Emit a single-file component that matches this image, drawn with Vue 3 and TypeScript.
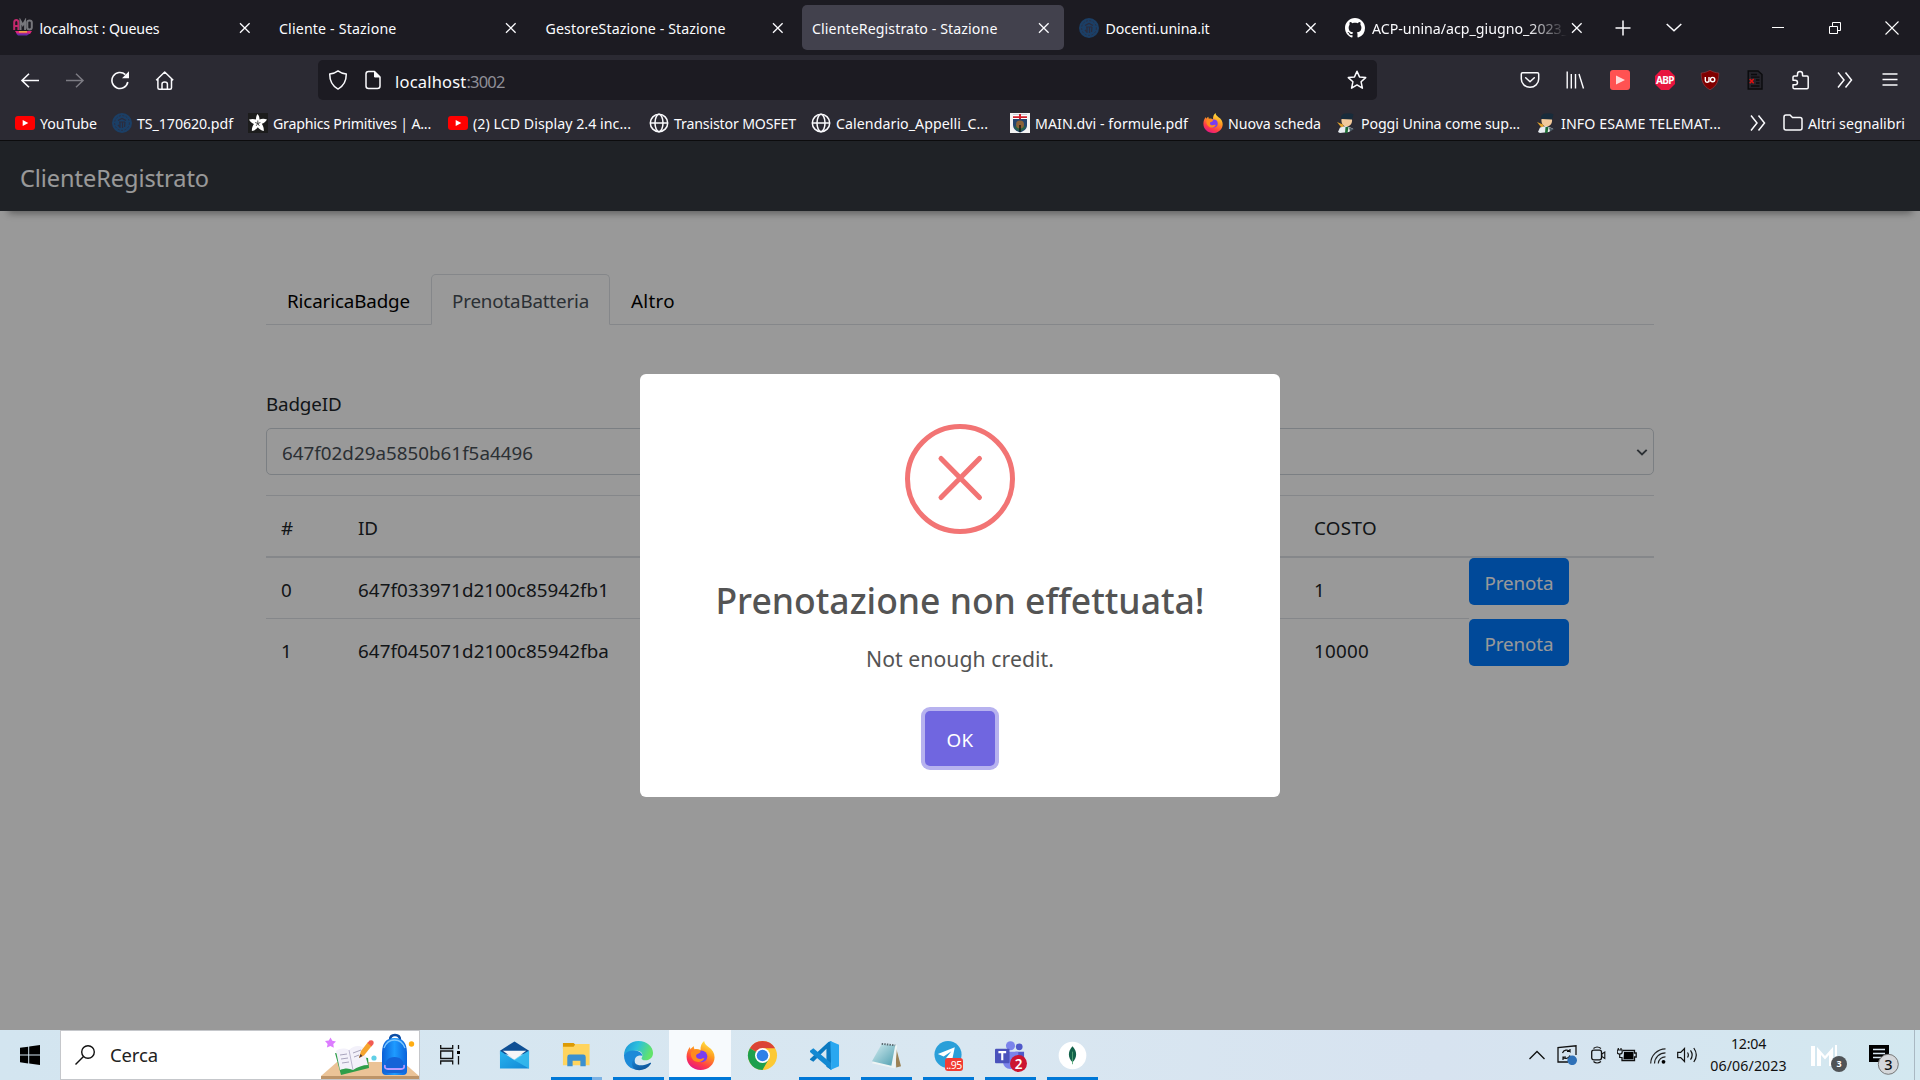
<script setup lang="ts">
interface Tab { title: string; width: number; icon?: string; active?: boolean; fade?: boolean }
interface Bookmark { label: string; icon: string; box: number; width: number }
interface Battery { n: number; id: string; cost: number; costWidth: number }
interface App { icon: string; line: 'none' | 'short' | 'full' | 'split'; badge?: string }

const tabs: Tab[] = [
  { title: 'localhost : Queues', width: 120, icon: 'amq' },
  { title: 'Cliente - Stazione', width: 117.5 },
  { title: 'GestoreStazione - Stazione', width: 180 },
  { title: 'ClienteRegistrato - Stazione', width: 185.5, active: true },
  { title: 'Docenti.unina.it', width: 104, icon: 'unina' },
  { title: 'ACP-unina/acp_giugno_2023_', width: 196, icon: 'github', fade: true },
]

const bookmarks: Bookmark[] = [
  { label: 'YouTube', icon: 'youtube', box: 57, width: 57 },
  { label: 'TS_170620.pdf', icon: 'unina', box: 96, width: 96 },
  { label: 'Graphics Primitives | A...', icon: 'adafruit', box: 160, width: 158 },
  { label: '(2) LCD Display 2.4 inc...', icon: 'youtube', box: 161, width: 158 },
  { label: 'Transistor MOSFET', icon: 'globe', box: 122, width: 122 },
  { label: 'Calendario_Appelli_C...', icon: 'globe', box: 159, width: 152 },
  { label: 'MAIN.dvi - formule.pdf', icon: 'crest', box: 153, width: 153 },
  { label: 'Nuova scheda', icon: 'firefox', box: 93, width: 93 },
  { label: 'Poggi Unina come sup...', icon: 'student', box: 160, width: 159 },
  { label: 'INFO ESAME TELEMAT...', icon: 'student', box: 160, width: 160 },
]

const batteries: Battery[] = [
  { n: 0, id: '647f033971d2100c85942fb1', cost: 1, costWidth: 11 },
  { n: 1, id: '647f045071d2100c85942fba', cost: 10000, costWidth: 55 },
]

const apps: App[] = [
  { icon: 'mail', line: 'none' },
  { icon: 'explorer', line: 'split' },
  { icon: 'edge', line: 'short' },
  { icon: 'firefox', line: 'full' },
  { icon: 'chrome', line: 'none' },
  { icon: 'vscode', line: 'short' },
  { icon: 'notepad', line: 'short' },
  { icon: 'telegram', line: 'short', badge: '..95' },
  { icon: 'teams', line: 'short', badge: '2' },
  { icon: 'mongo', line: 'short' },
]

/* Spreads a label's letters so that it takes the given advance width. */
const vFit = {
  mounted(el: HTMLElement, binding: { value: number }) {
    const range = document.createRange()
    range.selectNodeContents(el)
    const natural = range.getBoundingClientRect().width
    const count = (el.textContent ?? '').trim().length
    if (count > 0) el.style.letterSpacing = `${((binding.value - natural) / count).toFixed(3)}px`
  },
}
</script>

<template>
  <div class="screen">
    <svg class="defs" width="0" height="0" aria-hidden="true">
      <defs>
        <linearGradient id="gFox" x1="0.8" y1="0" x2="0.3" y2="1">
          <stop offset="0" stop-color="#fff04a" /><stop offset=".4" stop-color="#ff9a1f" />
          <stop offset=".75" stop-color="#ff3c47" /><stop offset="1" stop-color="#e31587" />
        </linearGradient>
        <linearGradient id="gEdgeTop" x1="0" y1="0" x2="1" y2="0.3">
          <stop offset="0" stop-color="#1b8fd8" /><stop offset=".5" stop-color="#2cc0dc" /><stop offset="1" stop-color="#62e36b" />
        </linearGradient>
        <linearGradient id="gEdgeBot" x1="0" y1="0" x2="1" y2="1">
          <stop offset="0" stop-color="#1a86d6" /><stop offset="1" stop-color="#0c4a8c" />
        </linearGradient>
        <linearGradient id="gMail" x1="0" y1="0" x2="1" y2="1">
          <stop offset="0" stop-color="#28b5f0" /><stop offset="1" stop-color="#1387d4" />
        </linearGradient>
        <linearGradient id="gBag" x1="0" y1="0" x2="1" y2="0">
          <stop offset="0" stop-color="#0b5fd6" /><stop offset=".5" stop-color="#1e9bff" /><stop offset="1" stop-color="#0a63dc" />
        </linearGradient>
        <linearGradient id="gNote" x1="0" y1="0" x2="1" y2="1">
          <stop offset="0" stop-color="#d6eef2" /><stop offset="1" stop-color="#4f9fb0" />
        </linearGradient>
      </defs>
      <symbol id="youtube" viewBox="0 0 20 20">
        <rect x="0" y="3" width="20" height="14" rx="3" fill="#f00" /><path d="M7.7 7v6l5.6-3z" fill="#fff" />
      </symbol>
      <symbol id="unina" viewBox="0 0 20 20">
        <circle cx="10" cy="10" r="10" fill="#1b3f66" />
        <circle cx="10" cy="10" r="7.4" fill="none" stroke="#2a3044" stroke-width="1" stroke-dasharray="2 1.5" />
        <path d="M6 7.5l4-2 4 2M7 9h6M8 9v6M10.5 9v6M13 9l-.5 5M6 12l2 2" stroke="#2b2c3d" stroke-width="1.2" fill="none" />
      </symbol>
      <symbol id="adafruit" viewBox="0 0 20 20">
        <rect width="20" height="20" fill="#1c1c1c" />
        <path d="M9.5 1c1.5 1.5 2 3.500 2 5.500 2.200-1 5-1 7.500 0-1.200 2.300-3.200 3.700-5.200 4.300 1.400 1.900 2.200 4.500 2 7.200-2.600-.5-4.800-1.900-6-3.700-1.300 1.800-3.400 3.200-5.900 3.700-.2-2.600.5-5 2-7C4 10.300 2 8.900 1 6.600c2.500-.9 5-.9 7 0 0-2 .3-4 1.500-5.600z" fill="#fff" />
        <path d="M9.800 7.500v3M9.800 10.500l2.600-1M9.800 10.500l1.600 2.300M9.800 10.500l-1.600 2.300M9.800 10.500l-2.600-1" stroke="#222" stroke-width=".8" />
      </symbol>
      <symbol id="globe" viewBox="0 0 20 20">
        <g fill="none" stroke="#fbfbfe" stroke-width="1.500"><circle cx="10" cy="10" r="8.700" /><ellipse cx="10" cy="10" rx="4" ry="8.700" /><path d="M1.300 10h17.400" /></g>
      </symbol>
      <symbol id="crest" viewBox="0 0 20 20">
        <rect width="20" height="20" fill="#f4f4f4" /><path d="M3 1.500h14V12c0 4-3 6.200-7 7.500C6 18.200 3 16 3 12z" fill="#24466e" />
        <path d="M3 1.500h14V6H3z" fill="#fff" /><path d="M3 3.300h14v1.700H3zM9 1h2v5H9z" fill="#d0202c" />
        <path d="M4 14l3 3 3 1.500 3-1.500 3-3-2-1H6z" fill="#276246" /><circle cx="10" cy="11.500" r="4" fill="#8a6238" /><path d="M9.300 12h1.400v7H9.300z" fill="#111" />
      </symbol>
      <symbol id="firefox" viewBox="0 0 20 20">
        <path d="M12.500 0c.3 2.200 1.600 3 3 4.200 2.700 1.600 4.200 4.200 4.200 7 0 5-4.300 8.800-9.600 8.800C4.600 20 .4 16 .4 10.800c0-2.600.9-4.900 2.300-6.700l.4 1.700c.8-1.100 1.500-1.700 2.400-2.100-.1.900 0 1.500.4 2 1.500-.3 3-.1 4.100.5C9.900 3.600 10.800 1.300 12.500 0z" fill="url(#gFox)" />
        <circle cx="10.600" cy="10.600" r="4.100" fill="#7a3df0" /><path d="M3.400 7.500c2.200-1.500 5-1.500 6.800-.1-.7 1.300-2.200 1.200-3 2.100-.7 1 .2 2.600 1.600 2.800 1.600.3 2.600-.8 4-.4-1 2.200-3.700 3.200-6 2.300C4.200 13.200 3 10.300 3.400 7.500z" fill="#ff8a1e" />
      </symbol>
      <symbol id="student" viewBox="0 0 20 20">
        <path d="M5 5.500q-.5-4 4-5 6-.8 8.500 1l-1.500 5.500H5z" fill="#182b3a" /><path d="M5.500 6l10.500.5c.5 4-2 7-5.500 7S5 10.500 5.500 6z" fill="#f3c99a" />
        <path d="M1 9l6 2.500 1 3-3-.5z" fill="#e2a32c" /><path d="M4 14.500l6-1.500 7 2.500-4 3.500-9 1-2-1z" fill="#e8ecf0" /><path d="M9.500 14h3l-1 6H9z" fill="#1e6b35" /><path d="M13 14.500l5 1.500-4 2.500z" fill="#4d5b66" />
      </symbol>
      <symbol id="github" viewBox="0 0 16 16">
        <path fill="#fff" d="M8 0C3.580 0 0 3.580 0 8c0 3.540 2.290 6.530 5.470 7.590.4.070.55-.17.55-.38 0-.19-.01-.82-.01-1.490-2.010.37-2.530-.49-2.690-.94-.09-.23-.48-.94-.82-1.130-.28-.15-.68-.52-.01-.53.63-.01 1.080.58 1.230.82.72 1.210 1.870.87 2.330.66.07-.52.28-.87.51-1.070-1.780-.2-3.640-.89-3.640-3.950 0-.87.31-1.590.82-2.150-.08-.2-.36-1.020.08-2.120 0 0 .67-.21 2.200.82.64-.18 1.320-.27 2-.27s1.360.09 2 .27c1.530-1.040 2.200-.82 2.200-.82.44 1.100.16 1.920.08 2.120.51.56.82 1.270.82 2.150 0 3.070-1.870 3.750-3.650 3.950.29.25.54.73.54 1.480 0 1.070-.01 1.930-.01 2.200 0 .21.15.46.55.38A8.010 8.010 0 0 0 16 8c0-4.420-3.580-8-8-8z" />
      </symbol>
      <symbol id="amq" viewBox="0 0 20 20">
        <g fill="none" stroke-width="2"><path d="M1.200 12V4.500Q1.200 2 3.300 2T5.400 4.500V12M1.200 8h4.200" stroke="#c2286c" /><path d="M7.500 12V3l2.300 4 2.300-4v9M14.300 4.500v5Q14.300 11.500 16.500 11.500T18.800 9.500v-5Q18.800 2.500 16.500 2.500T14.300 4.500" stroke="#77777c" /></g>
        <path d="M2 13h17l-2 3H4z" fill="#e0247a" /><path d="M3 15.500h14l-3 2H5z" fill="#6a2ca8" /><path d="M6 13.200h8v1.300H6z" fill="#f0c43a" />
      </symbol>
      <symbol id="chevrons" viewBox="0 0 20 20"><path d="M3 2.500l6 7.500-6 7.500M10.500 2.500l6 7.500-6 7.500" fill="none" stroke="#fbfbfe" stroke-width="1.500" /></symbol>
      <symbol id="cross" viewBox="0 0 20 20"><path d="M5 5.200l9.600 9.600M14.600 5.200l-9.600 9.600" fill="none" stroke="#fbfbfe" stroke-width="1.300" /></symbol>

      <symbol id="mail" viewBox="0 0 32 32">
        <path d="M1 11L16 1.500 31 11v4H1z" fill="#0e4f94" /><path d="M1 11l15 10 15-10v18.500H1z" fill="url(#gMail)" /><path d="M31 11v18.500L14.500 20z" fill="#41c8f5" opacity=".65" /><path d="M4 11h24l-12 9z" fill="#f6f6f8" />
      </symbol>
      <symbol id="explorer" viewBox="0 0 32 32">
        <path d="M2 3h11l2 2v4H2z" fill="#dc9a04" /><path d="M2 7h11l2-3h14.500v22H2z" fill="#ffd45e" /><path d="M6.500 27V17.500q0-2.500 2.500-2.500h14q2.500 0 2.500 2.500V27h-5.500v-5.500h-8V27z" fill="#3b90d0" />
      </symbol>
      <symbol id="edge" viewBox="0 0 32 32">
        <path d="M1 16C1 7 8 1 16 1c9 0 15 6 15 12.500 0 4.500-3.500 7.500-7.500 7.500-3.500 0-5-1.500-4-3 2-3.500-1-7-5-7C8 11 3 13 1 16z" fill="url(#gEdgeTop)" />
        <path d="M1 15.500C3 12 8 10 13.500 11c4 .6 6.500 3 6.500 5.500-4-1.500-8 1-8 5 0 5 5 8.500 10 7.500C14 33.500 1 29 1 15.500z" fill="#1c8ad8" />
        <path d="M12 19c-2 6 5 10 16 4.500.8-.3 1.200.3.800 1-3.800 6-10.800 7.500-15.300 6.200C8.500 29 8 21.500 12 19z" fill="url(#gEdgeBot)" />
      </symbol>
      <symbol id="chrome" viewBox="0 0 32 32">
        <circle cx="16" cy="16" r="15" fill="#fcc934" /><path d="M16 16L3 8.500A15 15 0 0 1 29 8.500H16z" fill="#db4437" /><path d="M3 8.500A15 15 0 0 0 16 31l6.500-11.300L16 16z" fill="#1ea04c" /><circle cx="16" cy="16" r="7.700" fill="#fff" /><circle cx="16" cy="16" r="6" fill="#2f80e8" />
      </symbol>
      <symbol id="vscode" viewBox="0 0 32 32">
        <path d="M23 1v30l-5-3.500V9L4.500 22.500 1 20.500v-1L20 2z" fill="#0b79c0" /><path d="M4.500 8.500L23 24v7L1 12.500v-1.500z" fill="#1389d2" /><path d="M22 1l9 4v22l-9 4 1-3z" fill="#2aa7f0" />
      </symbol>
      <symbol id="notepad" viewBox="0 0 32 32">
        <path d="M25 5l6 22-5 1.500z" fill="#9b8256" /><path d="M11 4l16 1.500-2 24L1 24z" fill="#eef4f4" /><path d="M11 4l14 1.500L21 26.500 1 22z" fill="url(#gNote)" /><path d="M11 4l14 1.500" stroke="#5b6970" stroke-width="2" stroke-dasharray="1.500 1.200" />
      </symbol>
      <symbol id="telegram" viewBox="0 0 32 32">
        <ellipse cx="15.500" cy="15" rx="14" ry="14" fill="#2a9fd9" /><path d="M5 14.500L22.500 7.500 19.500 22l-6-3.500L19 11.500 11 17z" fill="#fff" />
      </symbol>
      <symbol id="teams" viewBox="0 0 32 32">
        <circle cx="16" cy="6" r="4.700" fill="#7b83eb" /><circle cx="25" cy="7" r="3.500" fill="#5059c9" /><path d="M21 12h9v9q-2 6-9 5z" fill="#5059c9" /><path d="M8 12h16v10q-1 8-8 8t-8-8z" fill="#7b83eb" /><rect x="0" y="9" width="15" height="15" rx="1" fill="#4b53bc" /><path d="M3.500 12.500h8M7.500 12.500v8.500" stroke="#fff" stroke-width="2.200" />
      </symbol>
      <symbol id="mongo" viewBox="0 0 32 32">
        <circle cx="16" cy="16" r="14.300" fill="#fff" /><path d="M16 6.500c5 5 5 12 0 16.500-5-4.500-5-11.500 0-16.500z" fill="#116149" /><path d="M16 12v13" stroke="#55a878" stroke-width=".9" />
      </symbol>
    </svg>

    <div class="tabstrip">
      <div v-for="t in tabs" :key="t.title" class="tab" :class="{ active: t.active }">
        <svg v-if="t.icon" class="favicon"><use :href="'#' + t.icon" /></svg>
        <span class="tab-title" :class="{ fade: t.fade }"><span v-fit="t.width">{{ t.title }}</span></span>
        <svg class="close"><use href="#cross" /></svg>
      </div>
      <svg class="newtab" viewBox="0 0 20 20"><path d="M10 2.500v15M2.500 10h15" stroke="#fbfbfe" stroke-width="1.500" /></svg>
      <svg class="alltabs" viewBox="0 0 20 20"><path d="M2.700 6L10 12.800l7.300-6.800" fill="none" stroke="#fbfbfe" stroke-width="1.500" /></svg>
      <div class="winctl">
        <svg viewBox="0 0 20 20"><path d="M4 9.500h12" stroke="#fff" stroke-width="1" /></svg>
        <svg viewBox="0 0 20 20"><path d="M4.500 8.500h8v7h-8zM7.500 8.500v-4h8v8h-3" fill="none" stroke="#fff" stroke-width="1" /></svg>
        <svg viewBox="0 0 20 20"><path d="M3.500 3.500l13 13M16.500 3.500l-13 13" stroke="#fff" stroke-width="1.100" /></svg>
      </div>
    </div>

    <div class="toolbar">
      <div class="tools">
        <svg viewBox="0 0 20 20"><path d="M9 3.700L2 10.500l7 6.800M2 10.500h17" fill="none" stroke="#fbfbfe" stroke-width="1.600" /></svg>
        <svg viewBox="0 0 20 20"><path d="M11 3.700l7 6.800-7 6.800M18 10.500H1" fill="none" stroke="#7c7b83" stroke-width="1.500" /></svg>
        <svg viewBox="0 0 20 20"><path d="M17.800 12a8 8 0 1 1-2.400-7.400" fill="none" stroke="#fbfbfe" stroke-width="1.600" /><path d="M19 1.300v7h-7z" fill="#fbfbfe" /></svg>
        <svg viewBox="0 0 20 20"><path d="M1.200 10.200L9.700 2l8.500 8.200M2.900 8.700v9q0 1.500 1.500 1.500H15q1.500 0 1.500-1.500v-9M7 19v-5q0-2 2.700-2t2.700 2v5" fill="none" stroke="#fbfbfe" stroke-width="1.500" stroke-linejoin="round" /></svg>
      </div>
      <div class="urlbar">
        <svg class="i20" viewBox="0 0 20 20"><path d="M10 .9c2.200 1.700 4.600 2.600 8.300 3.200 0 6.400-2.200 11.800-8.300 15-6.100-3.200-8.300-8.600-8.300-15C5.400 3.500 7.800 2.600 10 .9z" fill="none" stroke="#fbfbfe" stroke-width="1.500" stroke-linejoin="round" /></svg>
        <svg class="i20 doc" viewBox="0 0 20 20"><path d="M11.500 1.500h-6Q3 1.500 3 4v12q0 2.500 2.500 2.500h9Q17 18.500 17 16V7z" fill="none" stroke="#fbfbfe" stroke-width="1.500" stroke-linejoin="round" /><path d="M11.500 1.500V7H17" fill="#fbfbfe" stroke="#fbfbfe" /></svg>
        <span class="url"><span v-fit="71.5">localhost</span><span v-fit="38" class="port">:3002</span></span>
        <svg class="i20" viewBox="0 0 20 20"><path d="M10 1.200l2.500 5.700 6.200.7-4.600 4.200 1.300 6.400-5.400-3.300-5.400 3.300 1.300-6.400L1.300 7.600l6.200-.7z" fill="none" stroke="#fbfbfe" stroke-width="1.500" stroke-linejoin="round" /></svg>
      </div>
      <div class="tools right">
        <svg viewBox="0 0 20 20"><path d="M2.500 2.700h15q1.200 0 1.200 1.200V9a8.700 8.300 0 0 1-17.400 0V3.900q0-1.200 1.200-1.200zM5.700 7.700l4.300 4 4.300-4" fill="none" stroke="#fbfbfe" stroke-width="1.500" stroke-linecap="round" stroke-linejoin="round" /></svg>
        <svg viewBox="0 0 20 20"><path d="M2.200 1.500v17M6.300 4v14.500M10.500 4v14.500M14 4l4.500 14.500" fill="none" stroke="#fbfbfe" stroke-width="1.400" /></svg>
        <svg viewBox="0 0 20 20"><rect width="20" height="20" rx="3" fill="#ff5252" /><path d="M6 5.500l9 4.500-9 4.500z" fill="#ffd9d9" /></svg>
        <div class="abp"><svg viewBox="0 0 20 20"><path d="M6 0h8l6 6v8l-6 6H6l-6-6V6z" fill="#e8143f" /></svg><span>ABP</span></div>
        <svg viewBox="0 0 20 20"><path d="M10 .3c3 1.700 5.500 2.400 8.800 2.700 0 8-2 13-8.800 16.800C3.200 16 1.200 11 1.200 3 4.500 2.700 7 2 10 .3z" fill="#800000" stroke="#a04a52" stroke-width=".5" /><path d="M5.300 7v3.500q0 1.700 1.700 1.700 2 0 2-1.700V7m0 5.200V7" fill="none" stroke="#fff" stroke-width="1.400" /><circle cx="12.600" cy="9.600" r="2.200" fill="none" stroke="#fff" stroke-width="1.400" /></svg>
        <svg viewBox="0 0 20 20"><path d="M3.200 1h9.800l4 3.500V19H3.200z" fill="#24232a" stroke="#0b0b0d" stroke-width="1.400" /><path d="M6 4.500h6M6 7.200h8.500M11 10h3.500M11 13h3.500M6 16h8.500" stroke="#0b0b0d" stroke-width="1.300" /><path d="M4.700 9l4 4.200M8.700 9l-4 4.200" stroke="#e01010" stroke-width="1.500" /></svg>
        <svg viewBox="0 0 20 20"><path d="M7.500 5.200V4a2.500 2.500 0 0 1 5 0v1.200q0 .8.800.8H17q1.200 0 1.200 1.200v10.300q0 1.200-1.200 1.200H4.500q-1.500 0-1.500-1.300v-2.600h2.200a2.300 2.300 0 0 0 0-4.600H3V7.300Q3 6 4.300 6h2.400q.8 0 .8-.8z" fill="none" stroke="#fbfbfe" stroke-width="1.500" stroke-linejoin="round" /></svg>
        <svg><use href="#chevrons" /></svg>
        <svg viewBox="0 0 20 20"><path d="M2.500 4h15M2.500 9.500h15M2.500 15h15" stroke="#fbfbfe" stroke-width="1.500" /></svg>
      </div>
    </div>

    <div class="bookmarks">
      <div v-for="b in bookmarks" :key="b.label" class="bm">
        <svg class="i20"><use :href="'#' + b.icon" /></svg>
        <span :style="{ width: b.box + 'px' }"><span v-fit="b.width">{{ b.label }}</span></span>
      </div>
      <svg class="i20 more"><use href="#chevrons" /></svg>
      <div class="bm other">
        <svg class="i20" viewBox="0 0 20 20"><path d="M1 4q0-2 2-2h4l2.500 2.500H17q2 0 2 2V15q0 2-2 2H3q-2 0-2-2z" fill="none" stroke="#fbfbfe" stroke-width="1.500" /></svg>
        <span v-fit="97">Altri segnalibri</span>
      </div>
    </div>

    <main class="page">
      <header class="navbar"><span v-fit="189">ClienteRegistrato</span></header>
      <div class="container">
        <nav class="nav-tabs">
          <a class="link"><span v-fit="123">RicaricaBadge</span></a>
          <a class="link current"><span v-fit="137">PrenotaBatteria</span></a>
          <a class="link"><span v-fit="44">Altro</span></a>
        </nav>
        <label class="label"><span v-fit="75.5">BadgeID</span></label>
        <div class="select">
          <span v-fit="251">647f02d29a5850b61f5a4496</span>
          <svg viewBox="0 0 12 12"><path d="M1.300 2.800L6 7.500l4.700-4.700" fill="none" stroke="#495057" stroke-width="1.900" /></svg>
        </div>
        <div class="table">
          <div class="tr head">
            <div class="td">#</div>
            <div class="td"><span v-fit="20">ID</span></div>
            <div class="td"><span v-fit="63">COSTO</span></div>
            <div></div>
          </div>
          <div v-for="b in batteries" :key="b.id" class="tr">
            <div class="td"><span v-fit="11">{{ b.n }}</span></div>
            <div class="td"><span v-fit="251">{{ b.id }}</span></div>
            <div class="td"><span v-fit="b.costWidth">{{ b.cost }}</span></div>
            <div><button class="btn"><span v-fit="69">Prenota</span></button></div>
          </div>
        </div>
      </div>
      <div class="backdrop">
        <div class="modal">
          <div class="error-icon">
            <svg viewBox="0 0 100 100"><path d="M31 29.500l38.500 39M69.500 29.500L31 68.500" stroke="#f27474" stroke-width="5" stroke-linecap="round" /></svg>
          </div>
          <h2><span v-fit="489">Prenotazione non effettuata!</span></h2>
          <p><span v-fit="188">Not enough credit.</span></p>
          <button class="ok"><span v-fit="27">OK</span></button>
        </div>
      </div>
    </main>

    <footer class="taskbar">
      <div class="start"><svg viewBox="0 0 20 20"><path d="M0 2.800L8.200 1.700v7.800H0zM9.200 1.500L20 0v9.500H9.200zM0 10.500h8.200v7.900L0 17.200zM9.200 10.500H20V20L9.200 18.500z" /></svg></div>
      <div class="search">
        <svg class="lens" viewBox="0 0 20 20"><circle cx="13" cy="7" r="6.300" fill="none" stroke="#111" stroke-width="1.400" /><path d="M8.500 11.500L.5 19.500" stroke="#111" stroke-width="1.400" /></svg>
        <span v-fit="48">Cerca</span>
        <svg class="art" viewBox="0 0 98 48">
          <path d="M16 31h66l16 14v3H0v-3z" fill="#ebc397" /><path d="M0 45h98v3H0z" fill="#bd9468" />
          <path d="M9.500 6.500l1.800 3.300 3.700.7-2.700 2.500.5 3.800-3.400-1.700-3.500 1.400.700-3.600L4 10l3.800-.4z" fill="#dc7cff" />
          <path d="M14 22l6 22 28-7-1-10z" fill="#2e9e49" /><path d="M15 20l4 19c5-2 9-2 13 0 4-3 10-5 15-5l-5-18c-5-2-10-1-14 3-4-2-9-2-13 1z" fill="#f3f1fa" /><path d="M28 19l4 20" stroke="#bcb7cf" /><path d="M19 24l7-1M20 28l7-1M21 32l7-1M32 22l8-3M33 26l5-2" stroke="#a9a5bd" stroke-width="1" />
          <path d="M38 27l2-7 7-9 4 3.500-8 10z" fill="#f6a42d" /><path d="M46.500 12l2-2.500q5-1 4 3.500l-2 2.500z" fill="#f15b52" /><path d="M38 27l1.500-4 2 2z" fill="#553a37" />
          <circle cx="53" cy="27" r="2.600" fill="#60cfe6" /><circle cx="90.500" cy="13" r="2.700" fill="#ffad12" />
          <path d="M69 9q0-5 5-5t5 5" fill="none" stroke="#0b4da4" stroke-width="2.500" /><path d="M61 22Q61 7 73.500 7T86 22v18q0 4-4 4H65q-4 0-4-4z" fill="url(#gBag)" /><path d="M63 17q3-8 10.500-8T84 17" fill="none" stroke="#7cc7ff" stroke-width="1.300" /><path d="M64 37q0-11 9.500-11T83 37v2q0 3-3 3H67q-3 0-3-3z" fill="#1464d8" /><path d="M64 34q-1 4 3 4h13q4 0 3-4" fill="none" stroke="#b79cff" stroke-width="1.800" />
        </svg>
      </div>
      <div class="cell view"><svg class="i20" viewBox="0 0 20 20"><path d="M.7 0v3.500h12V0M.7 19.500V16h12v3.500M.7 6h12v7.500H.7zM18.500 0v4M18.500 11v8.500" fill="none" stroke="#111" stroke-width="1.300" /><path d="M17 6h3v3h-3z" /></svg></div>
      <div v-for="a in apps" :key="a.icon" class="cell" :class="'line-' + a.line">
        <svg :class="a.icon === 'firefox' ? 'fox' : 'app'"><use :href="'#' + a.icon" /></svg>
        <span v-if="a.badge" class="badge" :class="a.icon">{{ a.badge }}</span>
      </div>
      <div class="tray">
        <svg class="up" viewBox="0 0 16 20"><path d="M.5 14L8 6.500l7.500 7.500" fill="none" stroke="#111" stroke-width="1.300" /></svg>
        <svg class="sync" viewBox="0 0 20 20"><path d="M11 17H1V2.500L19 .8V10" fill="none" stroke="#111" stroke-width="1.300" /><path d="M5.500 8a4.500 4.500 0 0 1 7.500-1.500V4M13 6.500h-3M13 10.500a4.500 4.500 0 0 1-7 2v2.500M6 12h3" fill="none" stroke="#111" stroke-width="1.200" /><circle cx="15.200" cy="15.300" r="4.800" fill="#2f71b8" /></svg>
        <svg class="cam" viewBox="0 0 15 20"><path d="M2.500 3.500Q6 .5 10 3.500M2.500 16.500q3.500 3 7.500 0" fill="none" stroke="#111" stroke-width="1.200" /><rect x=".7" y="5.200" width="9.800" height="9.600" rx="2" fill="none" stroke="#111" stroke-width="1.300" /><path d="M10.800 9l3-2v6.500l-3-2z" fill="none" stroke="#111" stroke-width="1.100" /></svg>
        <svg class="bat" viewBox="0 0 20 20"><path d="M6 5.500h11.500v2.500h1.700v4h-1.700v3.500H5V12" fill="none" stroke="#111" stroke-width="1.300" /><path d="M7 7h9.500v7.300H6.500z" /><path d="M1.300 3v2M4 3v2M.2 5h5v2q0 2-2.500 2T.2 7zM2.700 9v3.500H5" fill="none" stroke="#111" stroke-width="1.200" /></svg>
        <svg class="wifi" viewBox="0 0 16 16"><g fill="none" stroke="#222" stroke-width="1.200"><path d="M.7 15.500A15 15 0 0 1 15.500.8M4.500 15.500A11 11 0 0 1 15.500 4.800M8.300 15.500a7 7 0 0 1 7.200-6.700" /></g><circle cx="13.500" cy="13.800" r="1.900" /></svg>
        <svg class="vol" viewBox="0 0 21 20"><path d="M.7 7.300h3L7.500 3.500v13L3.700 12.700h-3zM10.500 7.500q1.700 2.500 0 5M13.500 5.300q3.300 4.700 0 9.400M16.800 3q5 7 0 14" fill="none" stroke="#111" stroke-width="1.200" /></svg>
        <div class="clock"><span v-fit="35">12:04</span><span v-fit="76.5">06/06/2023</span></div>
        <svg class="mlogo" viewBox="0 0 38 30"><path d="M0 2h4v20H0zM6 22V3l8 9 8-9v19h-4V11l-4 4.500L10 11v11zM24 1h2v20h-2z" fill="#fff" /><circle cx="28" cy="20" r="8" fill="#505457" /><text x="28" y="23.200" font-size="9" font-weight="700" fill="#fff" text-anchor="middle">3</text></svg>
        <svg class="notif" viewBox="0 0 32 30"><path d="M0 0h20v17h-5v4.500L10.500 17H0z" /><path d="M4 4.500h12M4 8.500h12M4 12.500h8" stroke="#d9e8f2" stroke-width="1.300" /><circle cx="19.300" cy="19.300" r="10" fill="#d4d7da" stroke="#777" stroke-width="1" /><text x="19.300" y="24.500" font-size="14.500" font-weight="500" fill="#111" text-anchor="middle">3</text></svg>
      </div>
    </footer>
  </div>
</template>

<style>
body { margin: 0; overflow: hidden; }
</style>

<style scoped>
.screen { width: 1920px; height: 1080px; display: flex; flex-direction: column; overflow: hidden; font-family: "Noto Sans", "Open Sans", sans-serif; color: #fbfbfe; }
.screen * { box-sizing: border-box; }
.screen span { white-space: nowrap; }
svg { flex: none; display: block; }
.defs { position: absolute; }
.i20 { width: 20px; height: 20px; }

.tabstrip { height: 55px; flex: none; background: #1c1b22; display: flex; align-items: center; padding-left: 2.5px; }
.tab { width: 262px; height: 45px; margin-right: 4.500px; padding: 0 10px; border-radius: 5px; display: flex; align-items: center; font-size: 14.200px; flex: none; }
.tab.active { background: #42414d; }
.favicon { width: 20px; height: 20px; margin-right: 7px; }
.tab-title { flex: 1; min-width: 0; padding-top: 1px; }
.fade { -webkit-mask-image: linear-gradient(90deg, #000 80%, transparent 100%); mask-image: linear-gradient(90deg, #000 80%, transparent 100%); overflow: hidden; }
.close { width: 20px; height: 20px; }
.newtab { width: 20px; height: 20px; margin-left: 11.500px; }
.alltabs { width: 20px; height: 20px; margin-left: 31px; }
.winctl { margin-left: auto; display: flex; gap: 37px; padding-right: 18.500px; }
.winctl svg { width: 20px; height: 20px; }

.toolbar { height: 50px; flex: none; background: #2b2a33; display: flex; align-items: center; padding: 0 7.500px; }
.tools { display: flex; }
.tools svg { width: 20px; height: 20px; margin: 0 12.500px; }
.tools.right { margin-left: auto; }
.abp { position: relative; }
.abp span { position: absolute; inset: 0; display: flex; align-items: center; justify-content: center; font-size: 10px; font-weight: 700; letter-spacing: -.6px; }
.urlbar { width: 1059px; height: 40px; margin-left: 130.500px; background: #1c1b22; border-radius: 5px; display: flex; align-items: center; padding: 0 10px; font-size: 16.500px; }
.doc { margin-left: 15px; }
.url { margin-left: 12px; padding-top: 2px; flex: 1; }
.port { color: #8f8f98; }

.bookmarks { height: 36px; flex: none; background: #2b2a33; border-bottom: 1px solid #0c0c0d; display: flex; align-items: center; padding: 0 15px; font-size: 14.200px; gap: 15px; }
.bm { display: flex; align-items: center; gap: 5px; }
.bm > span { display: block; padding-top: 2px; }
.more { margin-left: 12px; }
.bm.other { margin-left: auto; }

.page { position: relative; flex: 1; background: #fff; color: #212529; font-size: 18.800px; min-height: 0; }
.navbar { height: 70px; background: #343a40; color: #fff; padding: 4px 0 0 20px; display: flex; align-items: center; font-size: 23.500px; box-shadow: 0 10px 7.500px -7.500px #999; }
.container { width: 1388px; margin: 63px auto 0; }
.nav-tabs { display: flex; height: 51px; border-bottom: 1px solid #dee2e6; }
.link { padding: 2px 20px 0; border: 1px solid transparent; height: 51px; display: flex; align-items: center; color: #000; }
.current { border-color: #dee2e6 #dee2e6 #fff; border-radius: 5px 5px 0 0; background: #fff; color: #495057; }
.label { display: block; margin-top: 64px; height: 30px; line-height: 30px; }
.select { margin-top: 9px; height: 47px; border: 1px solid #ced4da; border-radius: 5px; display: flex; align-items: center; justify-content: space-between; padding: 2px 5px 0 15px; color: #495057; }
.select svg { width: 12px; height: 12px; }
.table { margin-top: 20px; }
.tr { display: grid; grid-template-columns: 76px 956px 171px 1fr; height: 60px; }
.tr.head { height: 63px; border-top: 1px solid #dee2e6; border-bottom: 2px solid #dee2e6; }
.td { padding: 4px 0 0 16px; display: flex; align-items: center; }
.td:first-child { padding-left: 15px; }
.tr:nth-child(3) .td { border-top: 1px solid #dee2e6; height: 61px; }
.tr:nth-child(3) .btn { margin-top: 1px; }
.btn { display: block; width: 100px; height: 47px; border: 0; border-radius: 5px; background: #007bff; color: #fff; font: inherit; padding: 3px 0 0; }
.backdrop { position: absolute; inset: 0; background: rgba(0, 0, 0, .4); display: flex; align-items: center; justify-content: center; }
.modal { width: 640px; height: 423px; background: #fff; border-radius: 6px; display: flex; flex-direction: column; align-items: center; padding-top: 50px; color: #545454; }
.error-icon { width: 110px; height: 110px; border: 5px solid #f27474; border-radius: 50%; }
.error-icon svg { width: 100px; height: 100px; }
h2 { margin: 41px 0 0; font-size: 35.500px; line-height: 50px; font-weight: 550; }
p { margin: 18px 0 0; font-size: 21.200px; line-height: 32px; }
.ok { margin-top: 36px; width: 70px; height: 55px; border: 0; border-radius: 5px; background: #7066e0; box-shadow: 0 0 0 4px #b7b2ef; color: #fff; font: inherit; font-size: 18.800px; padding: 2px 0 0; }

.taskbar { height: 50px; flex: none; background: linear-gradient(90deg, #d3e5f0, #d9e7f1 50%, #d7e3f0 75%, #d3e8f0); display: flex; color: #111; }
.start { width: 60px; display: flex; align-items: center; justify-content: center; }
.start svg { width: 20px; height: 20px; }
.search { width: 360px; height: 50px; border: 1px solid #c5c7cb; background: #fff; display: flex; align-items: center; padding-left: 14px; font-size: 18.500px; color: #222; }
.search span { padding-bottom: 2px; }
.lens { width: 20px; height: 20px; margin-right: 15px; }
.art { width: 98px; height: 48px; margin-left: auto; }
.cell { position: relative; width: 62px; flex: none; display: flex; align-items: center; justify-content: center; background-repeat: no-repeat; background-position: 0 100%; background-size: 100% 3px; }
.view { width: 60px; margin-right: 3px; }
.app { width: 31px; height: 31px; }
.fox { width: 29px; height: 29px; }
.line-short { background-image: linear-gradient(90deg, transparent 6px, #0078d7 6px 57px, transparent 57px); }
.line-split { background-image: linear-gradient(90deg, transparent 6px, #0078d7 6px 47px, #7cb2e4 47px 57px, transparent 57px); }
.line-full { background-image: linear-gradient(#0078d7, #0078d7); background-color: #f7fafd; }
.badge { position: absolute; display: flex; align-items: center; justify-content: center; color: #fff; }
.badge.telegram { left: 28px; top: 28px; width: 18px; height: 13px; border-radius: 3px; background: #f23c34; font-size: 10.500px; letter-spacing: -.5px; }
.badge.teams { left: 31px; top: 25px; width: 17px; height: 17px; border-radius: 50%; background: #cc1530; font-size: 13.500px; font-weight: 600; }
.tray { margin-left: auto; width: 391px; display: flex; align-items: center; border-right: 1px solid #a9b8c2; margin-right: 5px; }
.up { width: 16px; height: 20px; margin-left: 5px; }
.sync { width: 20px; height: 20px; margin-left: 12px; }
.cam { width: 15px; height: 20px; margin-left: 14px; }
.bat { width: 20px; height: 20px; margin-left: 11px; }
.wifi { width: 16px; height: 16px; margin-left: 13px; margin-top: 2px; }
.vol { width: 21px; height: 20px; margin-left: 11px; }
.clock { width: 77px; margin-left: 12px; display: flex; flex-direction: column; align-items: center; font-size: 14.200px; line-height: 22.500px; }
.mlogo { width: 38px; height: 30px; margin-left: 24px; margin-top: 8px; }
.notif { width: 32px; height: 30px; margin-left: 20px; margin-top: 10px; }
</style>
